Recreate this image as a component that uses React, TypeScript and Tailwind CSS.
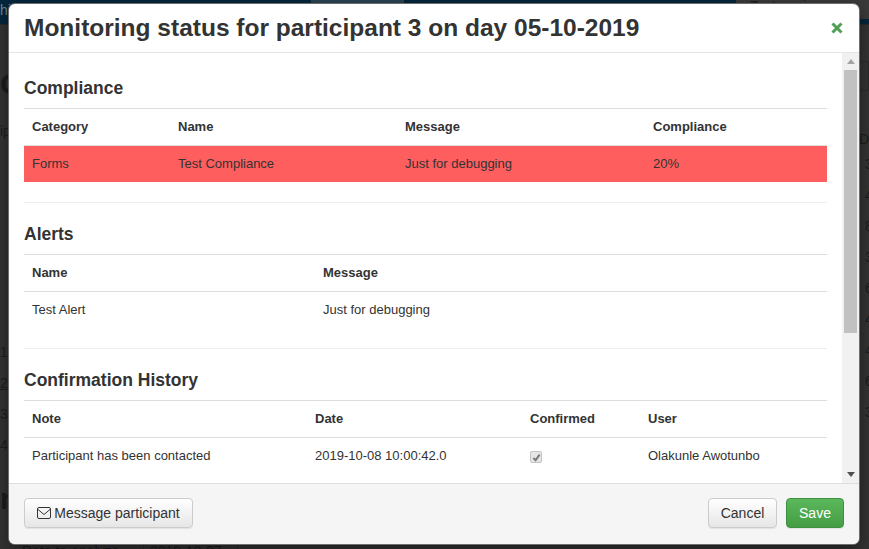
import type { ReactNode } from "react";

const BODY_FONT = "font-['Liberation_Sans',Arial,sans-serif]";

type Column = { label: string; width: string };

function SectionTable({
  title,
  columns,
  row,
  danger = false,
}: {
  title: string;
  columns: Column[];
  row: ReactNode[];
  danger?: boolean;
}) {
  return (
    <section>
      <h4 className="mb-[10px] text-[17.5px] leading-[20px] font-bold text-[#333]">
        {title}
      </h4>
      <table className="w-[803px] table-fixed border-separate border-spacing-0 text-[13px] leading-[20px] text-[#333]">
        <thead>
          <tr>
            {columns.map((col) => (
              <th
                key={col.label}
                className={`${col.width} h-[38px] border-t border-b border-[#ddd] px-2 text-left font-bold`}
              >
                {col.label}
              </th>
            ))}
          </tr>
        </thead>
        <tbody>
          <tr className={danger ? "bg-[#ff5e5e]" : ""}>
            {row.map((cell, i) => (
              <td key={i} className="h-[36px] px-2 pb-[1px] align-middle">
                {cell}
              </td>
            ))}
          </tr>
        </tbody>
      </table>
    </section>
  );
}

function DisabledCheck() {
  return (
    <span className="mt-[3px] flex h-[12px] w-[12px] items-center justify-center rounded-[2px] border border-[#c4c4c4] bg-[#e6e6e6]">
      <svg viewBox="0 0 10 10" className="h-[9px] w-[9px]">
        <path
          d="M1.5 5.5 L4 8 L8.5 1.8"
          fill="none"
          stroke="#7a7a7a"
          strokeWidth="2.2"
        />
      </svg>
    </span>
  );
}

function PageBehind() {
  return (
    <div className="flex h-[549px] flex-col overflow-hidden bg-[#333] text-[#1c1c1c]">
      <div className="flex h-[25px] shrink-0 border-b border-[#2a2a2a] bg-[#04263c] text-[14px]">
        <span className="text-[#6d8494]">hi</span>
        <div className="ml-[300px] h-[19px] w-[93px] bg-[#2b4352]" />
        <div className="ml-auto flex h-[19px] w-[133px] items-start bg-[#3a3a3a] pl-[14px] leading-[12px] text-[#1c1c1c]">
          Test again
        </div>
      </div>
      <div className="flex flex-1 justify-between">
        <div className="flex w-[30px] flex-col">
          <span className="mt-[42px] text-[30px] leading-[34px] font-bold">O</span>
          <span className="mt-[20px] text-[14px]">ip</span>
          <div className="mt-[200px] flex flex-col gap-[11px] text-[14px] leading-[20px]">
            <span>1</span>
            <span className="underline">2</span>
            <span>3</span>
            <span>4</span>
          </div>
          <span className="mt-[27px] text-[30px] leading-[34px] font-bold">n</span>
        </div>
        <div className="flex w-[10px] flex-col text-[14px]">
          <div className="mt-[36px] h-[30px] w-[10px] rounded-l border border-[#2a2a2a]" />
          <span className="mt-[38px]">De</span>
          <div className="mt-[4px] flex flex-col gap-[11px] pl-[6px] leading-[20px]">
            <span>3</span>
            <span>4</span>
            <span>8</span>
            <span>3</span>
            <span>6</span>
            <span>4</span>
            <span>4</span>
            <span>6</span>
            <span>3</span>
          </div>
        </div>
      </div>
      <div className="flex h-[8px] shrink-0 pl-[22px] text-[14px] leading-[20px]">
        <span className="w-[122px] border-r border-[#2a2a2a]">Date to analyze</span>
        <span className="w-[94px] border-r border-[#2a2a2a] pl-[6px]">2019-10-07</span>
      </div>
    </div>
  );
}

export default function App() {
  return (
    <div className={`relative h-[549px] w-[869px] overflow-hidden ${BODY_FONT}`}>
      <PageBehind />

      <div className="absolute top-[4px] left-[9px] flex h-[540px] w-[850px] flex-col overflow-hidden rounded-[6px] bg-white shadow-[0_0_0_1px_#6e6e6e,0_5px_15px_rgba(0,0,0,0.5)]">
        <div className="flex h-[49px] shrink-0 items-center justify-between border-b border-[#e5e5e5] pr-[16px] pl-[15px]">
          <h2 className="text-[24.5px] leading-[26px] font-bold text-[#333]">
            Monitoring status for participant 3 on day 05-10-2019
          </h2>
          <svg viewBox="0 0 12 12" className="h-[12px] w-[12px]">
            <path
              d="M1.5 1.5 L10.5 10.5 M10.5 1.5 L1.5 10.5"
              fill="none"
              stroke="#4f9f55"
              strokeWidth="3"
            />
          </svg>
        </div>

        <div className="flex min-h-0 flex-1">
          <div className="min-w-0 flex-1 overflow-hidden pt-[25px] pl-[15px]">
            <SectionTable
              title="Compliance"
              danger
              columns={[
                { label: "Category", width: "w-[146px]" },
                { label: "Name", width: "w-[227px]" },
                { label: "Message", width: "w-[248px]" },
                { label: "Compliance", width: "w-[182px]" },
              ]}
              row={["Forms", "Test Compliance", "Just for debugging", "20%"]}
            />
            <hr className="mt-[20px] mb-[21px] w-[803px] border-[#eee]" />
            <SectionTable
              title="Alerts"
              columns={[
                { label: "Name", width: "w-[291px]" },
                { label: "Message", width: "w-[512px]" },
              ]}
              row={["Test Alert", "Just for debugging"]}
            />
            <hr className="mt-[20px] mb-[21px] w-[803px] border-[#eee]" />
            <SectionTable
              title="Confirmation History"
              columns={[
                { label: "Note", width: "w-[283px]" },
                { label: "Date", width: "w-[215px]" },
                { label: "Confirmed", width: "w-[118px]" },
                { label: "User", width: "w-[187px]" },
              ]}
              row={[
                "Participant has been contacted",
                "2019-10-08 10:00:42.0",
                <DisabledCheck key="confirmed" />,
                "Olakunle Awotunbo",
              ]}
            />
          </div>

          <div className="flex w-[17px] shrink-0 flex-col items-center bg-[#f1f1f1]">
            <div className="flex h-[17px] items-center justify-center">
              <span className="h-0 w-0 border-r-[4px] border-b-[5px] border-l-[4px] border-r-transparent border-b-[#a3a3a3] border-l-transparent" />
            </div>
            <div className="h-[263px] w-[13px] bg-[#c1c1c1]" />
            <div className="mt-auto flex h-[17px] items-center justify-center">
              <span className="h-0 w-0 border-t-[5px] border-r-[4px] border-l-[4px] border-t-[#505050] border-r-transparent border-l-transparent" />
            </div>
          </div>
        </div>

        <div className="flex h-[61px] shrink-0 items-start justify-between border-t border-[#ddd] bg-[#f5f5f5] pt-[14px] pr-[15px] pl-[15px] text-[14px]">
          <button className="flex h-[30px] w-[169px] items-center justify-center gap-[3px] rounded-[4px] border border-[#ccc] bg-gradient-to-b from-white to-[#e6e6e6] text-[#333] [box-shadow:inset_0_1px_0_rgba(255,255,255,.15),0_1px_1px_rgba(0,0,0,.075)]">
            <svg viewBox="0 0 14 12" className="h-[12px] w-[14px]">
              <rect
                x="0.5"
                y="0.5"
                width="13"
                height="11"
                rx="1.5"
                fill="none"
                stroke="#333"
              />
              <path d="M1 2.5 L7 7.5 L13 2.5" fill="none" stroke="#333" />
            </svg>
            Message participant
          </button>
          <div className="flex gap-[9px]">
            <button className="h-[30px] w-[69px] rounded-[4px] border border-[#ccc] bg-gradient-to-b from-white to-[#e6e6e6] text-[#333] [box-shadow:0_1px_1px_rgba(0,0,0,.075)]">
              Cancel
            </button>
            <button className="h-[30px] w-[58px] rounded-[4px] border border-[#3e8f3e] bg-gradient-to-b from-[#5cb85c] to-[#449d44] text-white [box-shadow:0_1px_1px_rgba(0,0,0,.075)]">
              Save
            </button>
          </div>
        </div>
      </div>
    </div>
  );
}
